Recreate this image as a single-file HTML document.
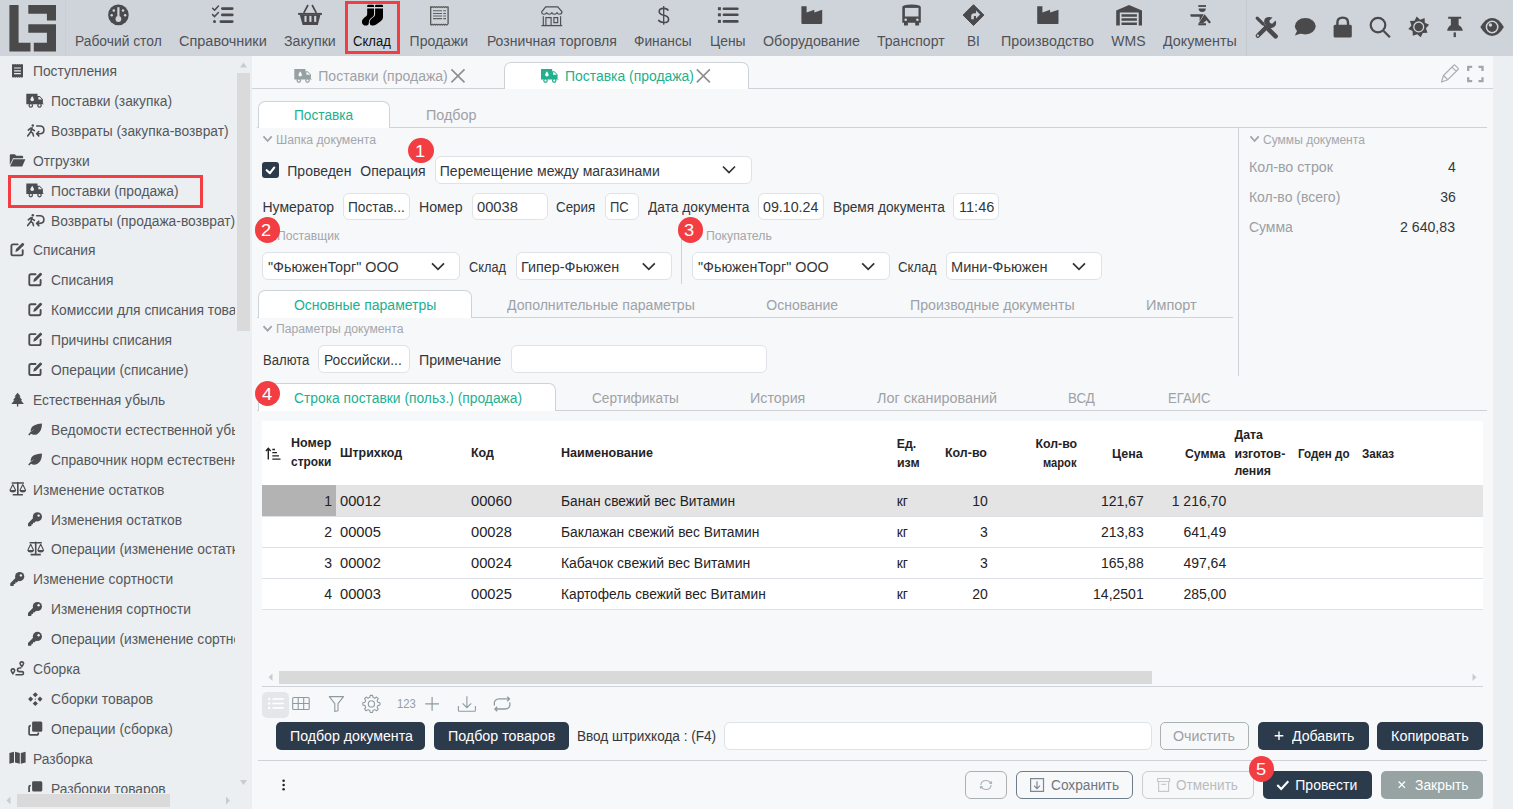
<!DOCTYPE html>
<html><head><meta charset="utf-8"><style>
html,body{margin:0;padding:0;width:1513px;height:809px;overflow:hidden;background:#f7f8fa;font-family:"Liberation Sans", sans-serif;}
.t{position:absolute;white-space:pre;line-height:1;transform-origin:0 0;}
svg{overflow:visible}
</style></head><body>
<div style="position:absolute;left:0px;top:0px;width:1513px;height:56px;background:#cfd4db"></div>
<div style="position:absolute;left:65px;top:0px;width:1px;height:56px;background:#c9ced5"></div>
<div style="position:absolute;left:1246px;top:0px;width:1px;height:56px;background:#c6cbd2"></div>
<svg style="position:absolute;left:0px;top:0px;" width="70" height="56" viewBox="0 0 70 56"><g fill="#4a4a4b"><path d="M9.4 5H18.6V42.8H30.5V51.6H9.4Z"/><path d="M28.3 5H56V20.6H46.9V13.7H28.3Z"/><path d="M28.3 24.2H56V51.6H33.8V42.8H46.9V32.7H28.3Z"/></g></svg>
<span class="t" style="left:74.91px;top:34.15px;font-size:14px;color:#505256;font-weight:400;transform:scaleX(0.9865);">Рабочий стол</span>
<span class="t" style="left:178.88px;top:34.15px;font-size:14px;color:#505256;font-weight:400;transform:scaleX(1.0342);">Справочники</span>
<span class="t" style="left:283.69px;top:34.15px;font-size:14px;color:#505256;font-weight:400;transform:scaleX(1.0142);">Закупки</span>
<span class="t" style="left:353.15px;top:34.15px;font-size:14px;color:#111;font-weight:400;transform:scaleX(0.9321);">Склад</span>
<span class="t" style="left:409.60px;top:34.15px;font-size:14px;color:#505256;font-weight:400;">Продажи</span>
<span class="t" style="left:486.90px;top:34.15px;font-size:14px;color:#505256;font-weight:400;">Розничная торговля</span>
<span class="t" style="left:633.91px;top:34.15px;font-size:14px;color:#505256;font-weight:400;transform:scaleX(0.9811);">Финансы</span>
<span class="t" style="left:709.61px;top:34.15px;font-size:14px;color:#505256;font-weight:400;transform:scaleX(0.9888);">Цены</span>
<span class="t" style="left:762.79px;top:34.15px;font-size:14px;color:#505256;font-weight:400;transform:scaleX(1.0182);">Оборудование</span>
<span class="t" style="left:877.30px;top:34.15px;font-size:14px;color:#505256;font-weight:400;transform:scaleX(1.0043);">Транспорт</span>
<span class="t" style="left:966.62px;top:34.15px;font-size:14px;color:#505256;font-weight:400;transform:scaleX(0.9747);">BI</span>
<span class="t" style="left:1001.09px;top:34.15px;font-size:14px;color:#505256;font-weight:400;transform:scaleX(1.0188);">Производство</span>
<span class="t" style="left:1111.30px;top:34.15px;font-size:14px;color:#505256;font-weight:400;">WMS</span>
<span class="t" style="left:1163.19px;top:34.15px;font-size:14px;color:#505256;font-weight:400;transform:scaleX(1.0213);">Документы</span>
<div style="position:absolute;left:345px;top:1px;width:55px;height:53px;box-sizing:border-box;border:3px solid #f23e43"></div>
<div style="position:absolute;left:0px;top:56px;width:252px;height:753px;background:#eceff1"></div>
<div style="position:absolute;left:0;top:56px;width:235px;height:737px;overflow:hidden">
<span class="t" style="left:33.21px;top:8.05px;font-size:14px;color:#53575c;font-weight:400;transform:scaleX(0.9860);">Поступления</span>
<span class="t" style="left:50.61px;top:37.95px;font-size:14px;color:#53575c;font-weight:400;transform:scaleX(0.9860);">Поставки (закупка)</span>
<span class="t" style="left:50.61px;top:67.85px;font-size:14px;color:#53575c;font-weight:400;transform:scaleX(0.9860);">Возвраты (закупка-возврат)</span>
<span class="t" style="left:33.21px;top:97.75px;font-size:14px;color:#53575c;font-weight:400;transform:scaleX(0.9860);">Отгрузки</span>
<span class="t" style="left:50.61px;top:127.65px;font-size:14px;color:#53575c;font-weight:400;transform:scaleX(0.9860);">Поставки (продажа)</span>
<span class="t" style="left:50.61px;top:157.55px;font-size:14px;color:#53575c;font-weight:400;transform:scaleX(0.9860);">Возвраты (продажа-возврат)</span>
<span class="t" style="left:33.21px;top:187.45px;font-size:14px;color:#53575c;font-weight:400;transform:scaleX(0.9860);">Списания</span>
<span class="t" style="left:50.61px;top:217.35px;font-size:14px;color:#53575c;font-weight:400;transform:scaleX(0.9860);">Списания</span>
<span class="t" style="left:50.61px;top:247.25px;font-size:14px;color:#53575c;font-weight:400;transform:scaleX(0.9860);">Комиссии для списания товаров</span>
<span class="t" style="left:50.61px;top:277.15px;font-size:14px;color:#53575c;font-weight:400;transform:scaleX(0.9860);">Причины списания</span>
<span class="t" style="left:50.61px;top:307.05px;font-size:14px;color:#53575c;font-weight:400;transform:scaleX(0.9860);">Операции (списание)</span>
<span class="t" style="left:33.21px;top:336.95px;font-size:14px;color:#53575c;font-weight:400;transform:scaleX(0.9860);">Естественная убыль</span>
<span class="t" style="left:50.61px;top:366.85px;font-size:14px;color:#53575c;font-weight:400;transform:scaleX(0.9860);">Ведомости естественной убыли</span>
<span class="t" style="left:50.61px;top:396.75px;font-size:14px;color:#53575c;font-weight:400;transform:scaleX(0.9860);">Справочник норм естественной убыли</span>
<span class="t" style="left:33.21px;top:426.65px;font-size:14px;color:#53575c;font-weight:400;transform:scaleX(0.9860);">Изменение остатков</span>
<span class="t" style="left:50.61px;top:456.55px;font-size:14px;color:#53575c;font-weight:400;transform:scaleX(0.9860);">Изменения остатков</span>
<span class="t" style="left:50.61px;top:486.45px;font-size:14px;color:#53575c;font-weight:400;transform:scaleX(0.9860);">Операции (изменение остатков)</span>
<span class="t" style="left:33.21px;top:516.35px;font-size:14px;color:#53575c;font-weight:400;transform:scaleX(0.9860);">Изменение сортности</span>
<span class="t" style="left:50.61px;top:546.25px;font-size:14px;color:#53575c;font-weight:400;transform:scaleX(0.9860);">Изменения сортности</span>
<span class="t" style="left:50.61px;top:576.15px;font-size:14px;color:#53575c;font-weight:400;transform:scaleX(0.9860);">Операции (изменение сортности)</span>
<span class="t" style="left:33.21px;top:606.05px;font-size:14px;color:#53575c;font-weight:400;transform:scaleX(0.9860);">Сборка</span>
<span class="t" style="left:50.61px;top:635.95px;font-size:14px;color:#53575c;font-weight:400;transform:scaleX(0.9860);">Сборки товаров</span>
<span class="t" style="left:50.61px;top:665.85px;font-size:14px;color:#53575c;font-weight:400;transform:scaleX(0.9860);">Операции (сборка)</span>
<span class="t" style="left:33.21px;top:695.75px;font-size:14px;color:#53575c;font-weight:400;transform:scaleX(0.9860);">Разборка</span>
<span class="t" style="left:50.61px;top:725.65px;font-size:14px;color:#53575c;font-weight:400;transform:scaleX(0.9860);">Разборки товаров</span>
</div>
<div style="position:absolute;left:8px;top:175px;width:195px;height:33px;box-sizing:border-box;border:3px solid #f23e43"></div>
<div style="position:absolute;left:237px;top:73px;width:13px;height:258px;background:#dadada"></div>
<div style="position:absolute;left:17px;top:794px;width:153px;height:13px;background:#dadada"></div>
<div style="position:absolute;left:252px;top:56px;width:1241px;height:753px;background:#f7f8fa"></div>
<div style="position:absolute;left:1493px;top:56px;width:20px;height:753px;background:#eceff1"></div>
<div style="position:absolute;left:252px;top:88px;width:1241px;height:1px;background:#cfd3d8"></div>
<div style="position:absolute;left:504px;top:62px;width:245px;height:27px;box-sizing:border-box;background:#fff;border:1px solid #cfd3d8;border-bottom:none;border-radius:7px 7px 0 0"></div>
<span class="t" style="left:318.30px;top:69.15px;font-size:14px;color:#9ea2a6;font-weight:400;">Поставки (продажа)</span>
<span class="t" style="left:564.60px;top:69.15px;font-size:14px;color:#22b08f;font-weight:400;transform:scaleX(0.9940);">Поставка (продажа)</span>
<div style="position:absolute;left:257px;top:127px;width:1230px;height:1px;background:#cfd3d8"></div>
<div style="position:absolute;left:258px;top:101px;width:132px;height:27px;box-sizing:border-box;background:#fff;border:1px solid #cfd3d8;border-bottom:none;border-radius:7px 7px 0 0"></div>
<span class="t" style="left:294.32px;top:107.65px;font-size:14px;color:#22b08f;font-weight:400;transform:scaleX(0.9776);">Поставка</span>
<span class="t" style="left:425.58px;top:107.65px;font-size:14px;color:#9ea2a6;font-weight:400;transform:scaleX(1.0234);">Подбор</span>
<span class="t" style="left:275.79px;top:134.04px;font-size:12px;color:#a3a7ab;font-weight:400;transform:scaleX(1.0193);">Шапка документа</span>
<div style="position:absolute;left:262px;top:162px;width:17px;height:16px;background:#2c3b4c;border-radius:3px"></div>
<span class="t" style="left:287.30px;top:164.05px;font-size:14px;color:#33373b;font-weight:400;">Проведен</span>
<span class="t" style="left:360.30px;top:164.05px;font-size:14px;color:#33373b;font-weight:400;">Операция</span>
<div style="position:absolute;left:435px;top:156px;width:317px;height:28px;box-sizing:border-box;background:#fff;border:1px solid #dfe2e6;border-radius:6px"></div>
<span class="t" style="left:439.80px;top:164.05px;font-size:14px;color:#33373b;font-weight:400;">Перемещение между магазинами</span>
<span class="t" style="left:262.50px;top:199.75px;font-size:14px;color:#33373b;font-weight:400;">Нумератор</span>
<div style="position:absolute;left:343px;top:193px;width:67px;height:27px;box-sizing:border-box;background:#fff;border:1px solid #dfe2e6;border-radius:6px"></div>
<span class="t" style="left:348.42px;top:199.75px;font-size:14px;color:#33373b;font-weight:400;transform:scaleX(0.9785);">Постав...</span>
<span class="t" style="left:419.49px;top:199.75px;font-size:14px;color:#33373b;font-weight:400;transform:scaleX(1.0107);">Номер</span>
<div style="position:absolute;left:472px;top:193px;width:76px;height:27px;box-sizing:border-box;background:#fff;border:1px solid #dfe2e6;border-radius:6px"></div>
<span class="t" style="left:477.26px;top:199.75px;font-size:14px;color:#33373b;font-weight:400;transform:scaleX(1.0509);">00038</span>
<span class="t" style="left:556.33px;top:199.75px;font-size:14px;color:#33373b;font-weight:400;transform:scaleX(0.9538);">Серия</span>
<div style="position:absolute;left:605px;top:193px;width:34px;height:27px;box-sizing:border-box;background:#fff;border:1px solid #dfe2e6;border-radius:6px"></div>
<span class="t" style="left:609.95px;top:199.75px;font-size:14px;color:#33373b;font-weight:400;transform:scaleX(0.9260);">ПС</span>
<span class="t" style="left:648.41px;top:199.75px;font-size:14px;color:#33373b;font-weight:400;transform:scaleX(0.9832);">Дата документа</span>
<div style="position:absolute;left:758px;top:193px;width:66px;height:27px;box-sizing:border-box;background:#fff;border:1px solid #dfe2e6;border-radius:6px"></div>
<span class="t" style="left:763.29px;top:199.75px;font-size:14px;color:#33373b;font-weight:400;transform:scaleX(1.0153);">09.10.24</span>
<span class="t" style="left:833.02px;top:199.75px;font-size:14px;color:#33373b;font-weight:400;transform:scaleX(0.9782);">Время документа</span>
<div style="position:absolute;left:953px;top:193px;width:46px;height:27px;box-sizing:border-box;background:#fff;border:1px solid #dfe2e6;border-radius:6px"></div>
<span class="t" style="left:958.77px;top:199.75px;font-size:14px;color:#33373b;font-weight:400;transform:scaleX(1.0393);">11:46</span>
<span class="t" style="left:276.79px;top:230.14px;font-size:12px;color:#a3a7ab;font-weight:400;transform:scaleX(1.0113);">Поставщик</span>
<span class="t" style="left:705.69px;top:230.14px;font-size:12px;color:#a3a7ab;font-weight:400;transform:scaleX(1.0202);">Покупатель</span>
<div style="position:absolute;left:681px;top:238px;width:1px;height:46px;background:#cfd3d8"></div>
<div style="position:absolute;left:262px;top:252px;width:198px;height:28px;box-sizing:border-box;background:#fff;border:1px solid #dfe2e6;border-radius:6px"></div>
<span class="t" style="left:267.68px;top:259.65px;font-size:14px;color:#33373b;font-weight:400;transform:scaleX(1.0232);">&quot;ФьюженТорг&quot; ООО</span>
<span class="t" style="left:469.36px;top:259.65px;font-size:14px;color:#33373b;font-weight:400;transform:scaleX(0.9121);">Склад</span>
<div style="position:absolute;left:516px;top:252px;width:156px;height:28px;box-sizing:border-box;background:#fff;border:1px solid #dfe2e6;border-radius:6px"></div>
<span class="t" style="left:521.48px;top:259.65px;font-size:14px;color:#33373b;font-weight:400;transform:scaleX(1.0259);">Гипер-Фьюжен</span>
<div style="position:absolute;left:692px;top:252px;width:198px;height:28px;box-sizing:border-box;background:#fff;border:1px solid #dfe2e6;border-radius:6px"></div>
<span class="t" style="left:697.58px;top:259.65px;font-size:14px;color:#33373b;font-weight:400;transform:scaleX(1.0224);">&quot;ФьюженТорг&quot; ООО</span>
<span class="t" style="left:898.34px;top:259.65px;font-size:14px;color:#33373b;font-weight:400;transform:scaleX(0.9472);">Склад</span>
<div style="position:absolute;left:946px;top:252px;width:156px;height:28px;box-sizing:border-box;background:#fff;border:1px solid #dfe2e6;border-radius:6px"></div>
<span class="t" style="left:951.27px;top:259.65px;font-size:14px;color:#33373b;font-weight:400;transform:scaleX(1.0408);">Мини-Фьюжен</span>
<div style="position:absolute;left:257px;top:317px;width:976px;height:1px;background:#cfd3d8"></div>
<div style="position:absolute;left:258px;top:290px;width:214px;height:28px;box-sizing:border-box;background:#fff;border:1px solid #cfd3d8;border-bottom:none;border-radius:7px 7px 0 0"></div>
<span class="t" style="left:293.90px;top:297.75px;font-size:14px;color:#22b08f;font-weight:400;">Основные параметры</span>
<span class="t" style="left:507.10px;top:297.75px;font-size:14px;color:#9ea2a6;font-weight:400;transform:scaleX(1.0051);">Дополнительные параметры</span>
<span class="t" style="left:766.30px;top:297.75px;font-size:14px;color:#9ea2a6;font-weight:400;">Основание</span>
<span class="t" style="left:910.19px;top:297.75px;font-size:14px;color:#9ea2a6;font-weight:400;transform:scaleX(1.0098);">Производные документы</span>
<span class="t" style="left:1146.08px;top:297.75px;font-size:14px;color:#9ea2a6;font-weight:400;transform:scaleX(1.0350);">Импорт</span>
<span class="t" style="left:275.79px;top:322.74px;font-size:12px;color:#a3a7ab;font-weight:400;transform:scaleX(1.0135);">Параметры документа</span>
<span class="t" style="left:262.55px;top:353.15px;font-size:14px;color:#33373b;font-weight:400;transform:scaleX(0.9347);">Валюта</span>
<div style="position:absolute;left:318px;top:345px;width:92px;height:28px;box-sizing:border-box;background:#fff;border:1px solid #dfe2e6;border-radius:6px"></div>
<span class="t" style="left:323.71px;top:353.15px;font-size:14px;color:#33373b;font-weight:400;transform:scaleX(0.9873);">Российски...</span>
<span class="t" style="left:419.49px;top:353.15px;font-size:14px;color:#33373b;font-weight:400;transform:scaleX(1.0148);">Примечание</span>
<div style="position:absolute;left:511px;top:345px;width:256px;height:28px;box-sizing:border-box;background:#fff;border:1px solid #dfe2e6;border-radius:6px"></div>
<div style="position:absolute;left:1238px;top:128px;width:1px;height:248px;background:#cfd3d8"></div>
<span class="t" style="left:1262.90px;top:133.84px;font-size:12px;color:#a3a7ab;font-weight:400;transform:scaleX(1.0032);">Суммы документа</span>
<span class="t" style="left:1248.89px;top:159.95px;font-size:14px;color:#9b9fa3;font-weight:400;transform:scaleX(1.0173);">Кол-во строк</span>
<span class="t" style="left:1248.90px;top:189.95px;font-size:14px;color:#9b9fa3;font-weight:400;">Кол-во (всего)</span>
<span class="t" style="left:1248.90px;top:219.75px;font-size:14px;color:#9b9fa3;font-weight:400;">Сумма</span>
<span class="t" style="left:1448.11px;top:159.95px;font-size:14px;color:#33373b;font-weight:400;">4</span>
<span class="t" style="left:1440.33px;top:189.95px;font-size:14px;color:#33373b;font-weight:400;">36</span>
<span class="t" style="left:1400.29px;top:219.75px;font-size:14px;color:#33373b;font-weight:400;transform:scaleX(1.0097);">2 640,83</span>
<div style="position:absolute;left:257px;top:410px;width:1230px;height:1px;background:#cfd3d8"></div>
<div style="position:absolute;left:258px;top:383px;width:298px;height:28px;box-sizing:border-box;background:#fff;border:1px solid #cfd3d8;border-bottom:none;border-radius:7px 7px 0 0"></div>
<span class="t" style="left:293.91px;top:390.75px;font-size:14px;color:#22b08f;font-weight:400;transform:scaleX(0.9867);">Строка поставки (польз.) (продажа)</span>
<span class="t" style="left:592.32px;top:390.75px;font-size:14px;color:#9ea2a6;font-weight:400;transform:scaleX(0.9728);">Сертификаты</span>
<span class="t" style="left:750.19px;top:390.75px;font-size:14px;color:#9ea2a6;font-weight:400;transform:scaleX(1.0191);">История</span>
<span class="t" style="left:877.38px;top:390.75px;font-size:14px;color:#9ea2a6;font-weight:400;transform:scaleX(1.0278);">Лог сканирований</span>
<span class="t" style="left:1068.33px;top:390.75px;font-size:14px;color:#9ea2a6;font-weight:400;transform:scaleX(0.9555);">ВСД</span>
<span class="t" style="left:1167.55px;top:390.75px;font-size:14px;color:#9ea2a6;font-weight:400;transform:scaleX(0.9328);">ЕГАИС</span>
<div style="position:absolute;left:262px;top:421px;width:1221px;height:188px;background:#fff"></div>
<span class="t" style="left:290.68px;top:437.29px;font-size:12.3px;color:#1f2326;font-weight:700;transform:scaleX(1.0158);">Номер</span>
<span class="t" style="left:290.70px;top:456.39px;font-size:12.3px;color:#1f2326;font-weight:700;transform:scaleX(0.9689);">строки</span>
<span class="t" style="left:340.28px;top:447.09px;font-size:12.3px;color:#1f2326;font-weight:700;transform:scaleX(1.0097);">Штрихкод</span>
<span class="t" style="left:470.78px;top:447.09px;font-size:12.3px;color:#1f2326;font-weight:700;transform:scaleX(1.0080);">Код</span>
<span class="t" style="left:560.97px;top:447.09px;font-size:12.3px;color:#1f2326;font-weight:700;transform:scaleX(1.0196);">Наименование</span>
<span class="t" style="left:896.78px;top:437.59px;font-size:12.3px;color:#1f2326;font-weight:700;">Ед.</span>
<span class="t" style="left:896.78px;top:456.59px;font-size:12.3px;color:#1f2326;font-weight:700;transform:scaleX(1.0079);">изм</span>
<span class="t" style="left:945.18px;top:447.29px;font-size:12.3px;color:#1f2326;font-weight:700;transform:scaleX(1.0097);">Кол-во</span>
<span class="t" style="left:1035.59px;top:437.59px;font-size:12.3px;color:#1f2326;font-weight:700;">Кол-во</span>
<span class="t" style="left:1043.44px;top:456.59px;font-size:12.3px;color:#1f2326;font-weight:700;transform:scaleX(0.9067);">марок</span>
<span class="t" style="left:1112.18px;top:447.59px;font-size:12.3px;color:#1f2326;font-weight:700;transform:scaleX(1.0140);">Цена</span>
<span class="t" style="left:1185.19px;top:447.59px;font-size:12.3px;color:#1f2326;font-weight:700;transform:scaleX(0.9970);">Сумма</span>
<span class="t" style="left:1234.38px;top:428.59px;font-size:12.3px;color:#1f2326;font-weight:700;">Дата</span>
<span class="t" style="left:1234.38px;top:447.59px;font-size:12.3px;color:#1f2326;font-weight:700;">изготов-</span>
<span class="t" style="left:1234.38px;top:465.19px;font-size:12.3px;color:#1f2326;font-weight:700;">ления</span>
<span class="t" style="left:1298.32px;top:447.59px;font-size:12.3px;color:#1f2326;font-weight:700;transform:scaleX(0.9461);">Годен до</span>
<span class="t" style="left:1362.41px;top:447.59px;font-size:12.3px;color:#1f2326;font-weight:700;transform:scaleX(0.9522);">Заказ</span>
<div style="position:absolute;left:262px;top:485px;width:1221px;height:31px;background:#e4e4e4"></div>
<div style="position:absolute;left:262px;top:485px;width:74px;height:31px;background:#b3b3b3"></div>
<div style="position:absolute;left:262px;top:516px;width:1221px;height:1px;background:#dde1e5"></div>
<div style="position:absolute;left:262px;top:547px;width:1221px;height:1px;background:#dde1e5"></div>
<div style="position:absolute;left:262px;top:578px;width:1221px;height:1px;background:#dde1e5"></div>
<div style="position:absolute;left:262px;top:609px;width:1221px;height:1px;background:#dde1e5"></div>
<span class="t" style="left:324.21px;top:493.65px;font-size:14px;color:#1f2326;font-weight:400;">1</span>
<span class="t" style="left:339.97px;top:493.65px;font-size:14px;color:#1f2326;font-weight:400;transform:scaleX(1.0483);">00012</span>
<span class="t" style="left:470.76px;top:493.65px;font-size:14px;color:#1f2326;font-weight:400;transform:scaleX(1.0509);">00060</span>
<span class="t" style="left:560.91px;top:493.65px;font-size:14px;color:#1f2326;font-weight:400;transform:scaleX(0.9817);">Банан свежий вес Витамин</span>
<span class="t" style="left:896.70px;top:493.65px;font-size:14px;color:#1f2326;font-weight:400;">кг</span>
<span class="t" style="left:972.23px;top:493.65px;font-size:14px;color:#1f2326;font-weight:400;">10</span>
<span class="t" style="left:1100.88px;top:493.65px;font-size:14px;color:#1f2326;font-weight:400;">121,67</span>
<span class="t" style="left:1171.70px;top:493.65px;font-size:14px;color:#1f2326;font-weight:400;">1 216,70</span>
<span class="t" style="left:324.21px;top:524.65px;font-size:14px;color:#1f2326;font-weight:400;">2</span>
<span class="t" style="left:339.97px;top:524.65px;font-size:14px;color:#1f2326;font-weight:400;transform:scaleX(1.0483);">00005</span>
<span class="t" style="left:470.76px;top:524.65px;font-size:14px;color:#1f2326;font-weight:400;transform:scaleX(1.0509);">00028</span>
<span class="t" style="left:560.91px;top:524.65px;font-size:14px;color:#1f2326;font-weight:400;transform:scaleX(0.9864);">Баклажан свежий вес Витамин</span>
<span class="t" style="left:896.70px;top:524.65px;font-size:14px;color:#1f2326;font-weight:400;">кг</span>
<span class="t" style="left:980.01px;top:524.65px;font-size:14px;color:#1f2326;font-weight:400;">3</span>
<span class="t" style="left:1100.88px;top:524.65px;font-size:14px;color:#1f2326;font-weight:400;">213,83</span>
<span class="t" style="left:1183.38px;top:524.65px;font-size:14px;color:#1f2326;font-weight:400;">641,49</span>
<span class="t" style="left:324.21px;top:555.65px;font-size:14px;color:#1f2326;font-weight:400;">3</span>
<span class="t" style="left:339.97px;top:555.65px;font-size:14px;color:#1f2326;font-weight:400;transform:scaleX(1.0483);">00002</span>
<span class="t" style="left:470.76px;top:555.65px;font-size:14px;color:#1f2326;font-weight:400;transform:scaleX(1.0509);">00024</span>
<span class="t" style="left:560.90px;top:555.65px;font-size:14px;color:#1f2326;font-weight:400;">Кабачок свежий вес Витамин</span>
<span class="t" style="left:896.70px;top:555.65px;font-size:14px;color:#1f2326;font-weight:400;">кг</span>
<span class="t" style="left:980.01px;top:555.65px;font-size:14px;color:#1f2326;font-weight:400;">3</span>
<span class="t" style="left:1100.88px;top:555.65px;font-size:14px;color:#1f2326;font-weight:400;">165,88</span>
<span class="t" style="left:1183.38px;top:555.65px;font-size:14px;color:#1f2326;font-weight:400;">497,64</span>
<span class="t" style="left:324.21px;top:586.65px;font-size:14px;color:#1f2326;font-weight:400;">4</span>
<span class="t" style="left:339.97px;top:586.65px;font-size:14px;color:#1f2326;font-weight:400;transform:scaleX(1.0483);">00003</span>
<span class="t" style="left:470.76px;top:586.65px;font-size:14px;color:#1f2326;font-weight:400;transform:scaleX(1.0509);">00025</span>
<span class="t" style="left:560.91px;top:586.65px;font-size:14px;color:#1f2326;font-weight:400;transform:scaleX(0.9808);">Картофель свежий вес Витамин</span>
<span class="t" style="left:896.70px;top:586.65px;font-size:14px;color:#1f2326;font-weight:400;">кг</span>
<span class="t" style="left:972.23px;top:586.65px;font-size:14px;color:#1f2326;font-weight:400;">20</span>
<span class="t" style="left:1093.09px;top:586.65px;font-size:14px;color:#1f2326;font-weight:400;">14,2501</span>
<span class="t" style="left:1183.38px;top:586.65px;font-size:14px;color:#1f2326;font-weight:400;">285,00</span>
<div style="position:absolute;left:279px;top:671px;width:873px;height:13px;background:#d9d9d9"></div>
<div style="position:absolute;left:262px;top:686px;width:1221px;height:1px;background:#cfd3d8"></div>
<div style="position:absolute;left:262px;top:692px;width:27px;height:26px;background:#e4e6e9;border-radius:5px"></div>
<span class="t" style="left:396.83px;top:697.20px;font-size:13px;color:#939ea2;font-weight:400;transform:scaleX(0.8706);">123</span>
<div style="position:absolute;left:276px;top:722px;width:149px;height:28px;background:#2c3b4c;border-radius:5px"></div>
<span class="t" style="left:289.59px;top:728.75px;font-size:14px;color:#fff;font-weight:400;transform:scaleX(1.0114);">Подбор документа</span>
<div style="position:absolute;left:434px;top:722px;width:135px;height:28px;background:#2c3b4c;border-radius:5px"></div>
<span class="t" style="left:447.89px;top:728.75px;font-size:14px;color:#fff;font-weight:400;transform:scaleX(1.0190);">Подбор товаров</span>
<span class="t" style="left:577.12px;top:728.95px;font-size:14px;color:#33373b;font-weight:400;transform:scaleX(0.9696);">Ввод штрихкода : (F4)</span>
<div style="position:absolute;left:724px;top:722px;width:428px;height:28px;box-sizing:border-box;background:#fff;border:1px solid #dfe2e6;border-radius:6px"></div>
<div style="position:absolute;left:1160px;top:722px;width:89px;height:28px;box-sizing:border-box;border:1px solid #a9b2b0;border-radius:5px"></div>
<span class="t" style="left:1173.29px;top:728.95px;font-size:14px;color:#9ba0a3;font-weight:400;transform:scaleX(1.0162);">Очистить</span>
<div style="position:absolute;left:1258px;top:722px;width:111px;height:28px;background:#2c3b4c;border-radius:5px"></div>
<span class="t" style="left:1291.69px;top:728.75px;font-size:14px;color:#fff;font-weight:400;transform:scaleX(1.0091);">Добавить</span>
<div style="position:absolute;left:1377px;top:722px;width:106px;height:28px;background:#2c3b4c;border-radius:5px"></div>
<span class="t" style="left:1390.78px;top:728.75px;font-size:14px;color:#fff;font-weight:400;transform:scaleX(1.0303);">Копировать</span>
<div style="position:absolute;left:258px;top:760px;width:1229px;height:1px;background:#cfd3d8"></div>
<div style="position:absolute;left:965px;top:771px;width:42px;height:28px;box-sizing:border-box;border:1px solid #a9b2b0;border-radius:6px"></div>
<div style="position:absolute;left:1016px;top:771px;width:117px;height:28px;box-sizing:border-box;border:1px solid #6e7b88;border-radius:6px"></div>
<span class="t" style="left:1050.82px;top:777.95px;font-size:14px;color:#6f767d;font-weight:400;transform:scaleX(0.9777);">Сохранить</span>
<div style="position:absolute;left:1142px;top:771px;width:112px;height:28px;box-sizing:border-box;border:1px solid #c9cfcd;border-radius:6px"></div>
<span class="t" style="left:1176.32px;top:777.95px;font-size:14px;color:#b9bdbf;font-weight:400;transform:scaleX(0.9681);">Отменить</span>
<div style="position:absolute;left:1263px;top:771px;width:109px;height:28px;background:#2c3b4c;border-radius:5px"></div>
<span class="t" style="left:1295.30px;top:777.75px;font-size:14px;color:#fff;font-weight:400;">Провести</span>
<div style="position:absolute;left:1381px;top:771px;width:102px;height:28px;background:#97a3a2;border-radius:5px"></div>
<span class="t" style="left:1414.61px;top:777.75px;font-size:14px;color:#fff;font-weight:400;transform:scaleX(0.9922);">Закрыть</span>
<svg style="position:absolute;left:0;top:0" width="1513" height="809" viewBox="0 0 1513 809"><circle cx="118.4" cy="14.9" r="10.3" fill="#4a4a4c"/><path d="M117.3 7.2h2.2v9.5h-2.2z" fill="#cfd4db" /><circle cx="118.4" cy="19" r="2.9" fill="#cfd4db"/><circle cx="113.8" cy="10.4" r="1.25" fill="#cfd4db"/><circle cx="123" cy="10.4" r="1.25" fill="#cfd4db"/><circle cx="111.7" cy="15.2" r="1.25" fill="#cfd4db"/><circle cx="125.1" cy="15.2" r="1.25" fill="#cfd4db"/><path d="M212.6 8.2l2 2 3.8-4.1" fill="none" stroke="#4a4a4c" stroke-width="1.5" stroke-linecap="round" stroke-linejoin="round"/><path d="M212.6 14.6l2 2 3.8-4.1" fill="none" stroke="#4a4a4c" stroke-width="1.5" stroke-linecap="round" stroke-linejoin="round"/><circle cx="214.5" cy="21.6" r="1.5" fill="#4a4a4c"/><path d="M222.3 8.6H232.3M222.3 14.9H232.3M220.8 21.6H232.3" fill="none" stroke="#4a4a4c" stroke-width="2.6" stroke-linecap="round"/><path d="M303.8 12.9L308 5M316.3 12.9L312.1 5" fill="none" stroke="#4a4a4c" stroke-width="1.7" /><path d="M298.1 12.9H321.9V14.9H298.1Z" fill="#4a4a4c" /><path d="M299.8 14.9H320.4L317.8 25.1H302.6Z" fill="#4a4a4c" /><path d="M304.45 15.9h2.1v6h-2.1z" fill="#cfd4db" /><path d="M309.34999999999997 15.9h2.1v6h-2.1z" fill="#cfd4db" /><path d="M314.15 15.9h2.1v6h-2.1z" fill="#cfd4db" /><path d="M367.2 8.6H374V14.5Q374 15.8 372.8 16.7L371 18Q368.6 19.9 368.8 22.4Q369 24.6 367.6 25.2Q365.8 25.8 364.3 25.4Q361.9 24.8 361.9 22.3Q361.9 19.5 364.4 17.6L366.2 16.2Q367.2 15.4 367.2 14Z" fill="#000" /><path d="M375.1 8.6H383V17.6Q383 19.5 381 21L376.2 24.5Q374.2 25.8 372.2 25.5Q369.6 25 369.6 22.4Q369.6 20 371.9 18.3L374 16.8Q375.1 16 375.1 14.5Z" fill="#000" /><path d="M367.2 7V5.8Q367.2 4.7 368.3 4.7H372.9Q374 4.7 374 5.8V7Z" fill="#000" /><path d="M375.1 7V5.8Q375.1 4.7 376.2 4.7H381.9Q383 4.7 383 5.8V7Z" fill="#000" /><path d="M430.7 6.5V24.3M448.1 6.5V24.3" fill="none" stroke="#555" stroke-width="1.3" /><path d="M430.2 6.6l1.1 0.9 1.1-0.9 1.1 0.9 1.1-0.9 1.1 0.9 1.1-0.9 1.1 0.9 1.1-0.9 1.1 0.9 1.1-0.9 1.1 0.9 1.1-0.9 1.1 0.9 1.1-0.9 1.1 0.9 1.1-0.9" fill="none" stroke="#555" stroke-width="1.1" /><path d="M430.2 24.2l1.1 0.9 1.1-0.9 1.1 0.9 1.1-0.9 1.1 0.9 1.1-0.9 1.1 0.9 1.1-0.9 1.1 0.9 1.1-0.9 1.1 0.9 1.1-0.9 1.1 0.9 1.1-0.9 1.1 0.9 1.1-0.9" fill="none" stroke="#555" stroke-width="1.1" /><path d="M433 10.8H442M443.2 10.8H446M433 13.4H442M443.2 13.4H446M433 16H442M443.2 16H446M433 18.6H442M443.2 18.6H446" fill="none" stroke="#606060" stroke-width="1.05" /><path d="M545.7 6.8H557.8L562 11.8Q562 14.2 559.6 14.2Q557.2 14.2 557 12.3Q556.8 14.2 554.3 14.2Q551.9 14.2 551.8 12.3Q551.6 14.2 549.2 14.2Q546.8 14.2 546.6 12.3Q546.4 14.2 544 14.2Q541.6 14.2 541.7 11.8Z" fill="none" stroke="#4f5053" stroke-width="1.15" /><path d="M543.3 16.2V25.3M560.6 16.2V25.3M545.9 25.3V17.6H551.1V25.3M553.9 17.6H557.7V22.6H553.9Z" fill="none" stroke="#4f5053" stroke-width="1.15" /><path d="M541.4 25.6H562.2" fill="none" stroke="#4f5053" stroke-width="1.3" /><path d="M663.7 6.1V24.7" fill="none" stroke="#4a4a4c" stroke-width="1.3" /><path d="M668.3 10.6Q667.4 8.4 663.7 8.4Q659.2 8.4 659.2 11.6Q659.2 14.2 663.7 15.3Q668.6 16.4 668.6 19.4Q668.6 22.5 663.7 22.5Q659.6 22.5 658.4 19.9" fill="none" stroke="#4a4a4c" stroke-width="1.6" /><path d="M717.9 7.199999999999999h3v3h-3z" fill="#4a4a4c" /><path d="M717.9 13.3h3v3h-3z" fill="#4a4a4c" /><path d="M717.9 19.9h3v3h-3z" fill="#4a4a4c" /><path d="M723.9 8.7H737.4M723.9 14.8H737.4M723.9 21.4H737.4" fill="none" stroke="#4a4a4c" stroke-width="2.6" stroke-linecap="round"/><path d="M801.4 6.2H806.6V12.6L814.3 9.8V12.6L822.2 9.8V23.1Q822.2 23.9 821.4 23.9H802.2Q801.4 23.9 801.4 23.1Z" fill="#4a4a4c" /><path d="M1037.2 6.2H1042.4V12.6L1050.1 9.8V12.6L1058.5 9.8V23.2Q1058.5 24 1057.7 24H1038Q1037.2 24 1037.2 23.2Z" fill="#4a4a4c" /><path d="M902.3 7.2Q902.3 4.6 911.5 4.6Q920.8 4.6 920.8 7.2V22.8H919.1V25.4H915.2V22.8H907.9V25.4H904V22.8H902.3Z" fill="#4a4a4c" /><path d="M904.9 7.9H918.5V16.5H904.9Z" fill="#cfd4db" /><circle cx="905.7" cy="19.7" r="1.3" fill="#cfd4db"/><circle cx="917.4" cy="19.7" r="1.3" fill="#cfd4db"/><path d="M973.5 4.7L983.9 15.1L973.5 25.5L963.1 15.1Z" fill="#4a4a4c" stroke="#4a4a4c" stroke-width="1" stroke-linejoin="round"/><path d="M971.2 19.2V16.2Q971.2 13.2 974.5 13.2H976V10.6L980.1 14.6L976 18.6V16H974.6Q973.8 16 973.8 16.8V19.2Z" fill="#cfd4db" /><path d="M1116.2 10.4L1129 5.1L1142 10.4V25.4H1138.7V12.4H1119.8V25.4H1116.2Z" fill="#4a4a4c" /><path d="M1121.5 15.4H1136.9M1121.5 19.6H1136.9M1121.5 23.8H1136.9" fill="none" stroke="#4a4a4c" stroke-width="2.5" /><path d="M1198.3 5.1H1206V6.9H1198.3Z" fill="#4a4a4c" /><path d="M1198.6 8.6H1205.8Q1205.8 12 1202.2 12Q1198.6 12 1198.6 8.6Z" fill="#4a4a4c" /><path d="M1190.4 14.2H1203.8L1199.6 21.3V16.7H1191.6Q1190.4 16.7 1190.4 15.45Z" fill="#4a4a4c" /><path d="M1204.6 14.3L1211 22.3L1209.2 23.5L1206.5 20.2L1203.3 23.1H1198.8Z" fill="#4a4a4c" /><path d="M1198.3 23.2H1206V25.3H1198.3Z" fill="#4a4a4c" /><path d="M1257.2 18.1L1263 23.9" fill="none" stroke="#4a4a4c" stroke-width="3.2" stroke-linecap="round"/><path d="M1263 23.9L1268.5 29.4" fill="none" stroke="#4a4a4c" stroke-width="1.6" /><path d="M1268.8 29.6L1275.6 36.3" fill="none" stroke="#4a4a4c" stroke-width="4.6" stroke-linecap="round"/><path d="M1257.8 35.8L1266 27.6" fill="none" stroke="#4a4a4c" stroke-width="4.4" stroke-linecap="round"/><circle cx="1257.9" cy="35.6" r="1.05" fill="#cfd4db"/><path d="M1264.4 23.6Q1263.2 18.5 1267.4 17.3Q1270.2 16.6 1272.5 17.6L1269.3 20.8L1270 23L1272.2 23.7L1275.6 20.5Q1276.8 23.5 1275.2 26Q1272.5 29.2 1268 27.6Z" fill="#4a4a4c" /><ellipse cx="1305.3" cy="26.2" rx="10.4" ry="8.2" fill="#4a4a4c"/><path d="M1297.5 30L1294.8 35.6L1302.5 33Z" fill="#4a4a4c" /><path d="M1337.4 25V22.5Q1337.4 17.6 1342.7 17.6Q1348 17.6 1348 22.5V25" fill="none" stroke="#4a4a4c" stroke-width="2.4" /><path d="M1333.6 26.2Q1333.6 24.7 1335.1 24.7H1350.3Q1351.8 24.7 1351.8 26.2V36Q1351.8 37.5 1350.3 37.5H1335.1Q1333.6 37.5 1333.6 36Z" fill="#4a4a4c" /><circle cx="1378" cy="25.1" r="7.3" fill="none" stroke="#4a4a4c" stroke-width="2.2"/><path d="M1383.6 31L1389.9 37.3" fill="none" stroke="#4a4a4c" stroke-width="2.3" /><path d="M1416.63 16.50L1414.59 20.75L1409.89 21.01L1411.44 25.46L1408.30 28.97L1412.55 31.01L1412.81 35.71L1417.26 34.16L1420.77 37.30L1422.81 33.05L1427.51 32.79L1425.96 28.34L1429.10 24.83L1424.85 22.79L1424.59 18.09L1420.14 19.64Z" fill="#4a4a4c" /><circle cx="1418.7" cy="26.9" r="4.9" fill="none" stroke="#cfd4db" stroke-width="1.3"/><path d="M1448.2 16.8H1461.2V18.8H1458.6V25Q1462.7 27.5 1462.7 30.8H1447.2Q1447.2 27.5 1450.9 25V18.8H1448.2Z" fill="#4a4a4c" /><path d="M1453.6 32.4H1455.9V37.1H1453.6Z" fill="#4a4a4c" /><path d="M1480.3 27Q1485.5 18 1492.1 18Q1498.7 18 1503.9 27Q1498.7 35.9 1492.1 35.9Q1485.5 35.9 1480.3 27Z" fill="#4a4a4c" /><circle cx="1492.1" cy="27" r="5.7" fill="none" stroke="#cfd4db" stroke-width="1.5"/><circle cx="1492.4" cy="27.2" r="3.7" fill="#4a4a4c"/><circle cx="1490.4" cy="25" r="1.7" fill="#cfd4db"/><g transform="translate(12 64.0)"><path d="M0 0.6L1.1 0L2.2 0.6L3.3 0L4.4 0.6L5.5 0L6.6 0.6L7.7 0L8.8 0.6L9.9 0L11 0.6V13.1L9.9 13.7L8.8 13.1L7.7 13.7L6.6 13.1L5.5 13.7L4.4 13.1L3.3 13.7L2.2 13.1L1.1 13.7L0 13.1Z" fill="#4c4d50"/><path d="M2.1 4H8.9M2.1 6.8H8.9M2.1 9.6H8.9" stroke="#eceff1" stroke-width="1.2"/></g><g transform="translate(26.3 93.7)"><path d="M0 0H11.2V10.6H0Z M11.2 2.4H13.4L16.6 5.5V10.1H17.5V10.6H11.2Z" fill="#4c4d50"/><path d="M12.1 3.3H13.2L15.6 5.6V5.9H12.1Z" fill="#eceff1"/><path d="M5.9 2.3Q4.1 4.9 4.1 5.9Q4.1 7.6 5.9 7.6Q7.7 7.6 7.7 5.9Q7.7 4.9 5.9 2.3Z" fill="#eceff1"/><circle cx="4.5" cy="11.7" r="2.3" fill="#4c4d50"/><circle cx="4.5" cy="11.7" r="1.1" fill="#eceff1"/><circle cx="13.2" cy="11.7" r="2.3" fill="#4c4d50"/><circle cx="13.2" cy="11.7" r="1.1" fill="#eceff1"/></g><g transform="translate(26.5 124.50000000000001)"><circle cx="6.3" cy="1.1" r="1.25" fill="#4c4d50"/><path d="M5.6 3.2L4.3 7.2M4.3 7.2L1.2 11.4M4.3 7.2L6.2 8.6L7 11.4M1.8 5.6L4.2 3.6L7.9 6.1" fill="none" stroke="#4c4d50" stroke-width="1.6" stroke-linecap="round" stroke-linejoin="round"/><path d="M10.2 1.5H13.4Q17.4 1.5 17.4 5.4Q17.4 9.2 13.4 9.2H10.6M12.3 7L10.1 9.2L12.3 11.4" fill="none" stroke="#4c4d50" stroke-width="1.6" stroke-linecap="round" stroke-linejoin="round"/></g><g transform="translate(9.8 154.29999999999998)"><path d="M0 1Q0 0 1 0H5L6.5 1.5H12.4Q13.3 1.5 13.3 2.4V4H3.2L0 10.6Z" fill="#4c4d50"/><path d="M3.6 5H15.6L12.4 12.3H0.2Z" fill="#4c4d50"/></g><g transform="translate(26.3 183.4)"><path d="M0 0H11.2V10.6H0Z M11.2 2.4H13.4L16.6 5.5V10.1H17.5V10.6H11.2Z" fill="#4c4d50"/><path d="M12.1 3.3H13.2L15.6 5.6V5.9H12.1Z" fill="#eceff1"/><path d="M5.9 2.3Q4.1 4.9 4.1 5.9Q4.1 7.6 5.9 7.6Q7.7 7.6 7.7 5.9Q7.7 4.9 5.9 2.3Z" fill="#eceff1"/><circle cx="4.5" cy="11.7" r="2.3" fill="#4c4d50"/><circle cx="4.5" cy="11.7" r="1.1" fill="#eceff1"/><circle cx="13.2" cy="11.7" r="2.3" fill="#4c4d50"/><circle cx="13.2" cy="11.7" r="1.1" fill="#eceff1"/></g><g transform="translate(26.5 214.2)"><circle cx="6.3" cy="1.1" r="1.25" fill="#4c4d50"/><path d="M5.6 3.2L4.3 7.2M4.3 7.2L1.2 11.4M4.3 7.2L6.2 8.6L7 11.4M1.8 5.6L4.2 3.6L7.9 6.1" fill="none" stroke="#4c4d50" stroke-width="1.6" stroke-linecap="round" stroke-linejoin="round"/><path d="M10.2 1.5H13.4Q17.4 1.5 17.4 5.4Q17.4 9.2 13.4 9.2H10.6M12.3 7L10.1 9.2L12.3 11.4" fill="none" stroke="#4c4d50" stroke-width="1.6" stroke-linecap="round" stroke-linejoin="round"/></g><g transform="translate(10.4 242.49999999999997)"><path d="M7.2 1.9H2.6Q1 1.9 1 3.5V11.8Q1 12.9 2.3 12.9H10.7Q12.3 12.9 12.3 11.3V7.6" fill="none" stroke="#4c4d50" stroke-width="1.9" stroke-linecap="round"/><path d="M5 9.6L5.6 6.6L11.5 0.7Q12.2 0 12.9 0.7L13.5 1.3Q14.2 2 13.5 2.7L7.6 8.6Z" fill="#4c4d50"/></g><g transform="translate(28.3 272.4)"><path d="M7.2 1.9H2.6Q1 1.9 1 3.5V11.8Q1 12.9 2.3 12.9H10.7Q12.3 12.9 12.3 11.3V7.6" fill="none" stroke="#4c4d50" stroke-width="1.9" stroke-linecap="round"/><path d="M5 9.6L5.6 6.6L11.5 0.7Q12.2 0 12.9 0.7L13.5 1.3Q14.2 2 13.5 2.7L7.6 8.6Z" fill="#4c4d50"/></g><g transform="translate(28.3 302.3)"><path d="M7.2 1.9H2.6Q1 1.9 1 3.5V11.8Q1 12.9 2.3 12.9H10.7Q12.3 12.9 12.3 11.3V7.6" fill="none" stroke="#4c4d50" stroke-width="1.9" stroke-linecap="round"/><path d="M5 9.6L5.6 6.6L11.5 0.7Q12.2 0 12.9 0.7L13.5 1.3Q14.2 2 13.5 2.7L7.6 8.6Z" fill="#4c4d50"/></g><g transform="translate(28.3 332.2)"><path d="M7.2 1.9H2.6Q1 1.9 1 3.5V11.8Q1 12.9 2.3 12.9H10.7Q12.3 12.9 12.3 11.3V7.6" fill="none" stroke="#4c4d50" stroke-width="1.9" stroke-linecap="round"/><path d="M5 9.6L5.6 6.6L11.5 0.7Q12.2 0 12.9 0.7L13.5 1.3Q14.2 2 13.5 2.7L7.6 8.6Z" fill="#4c4d50"/></g><g transform="translate(28.3 362.1)"><path d="M7.2 1.9H2.6Q1 1.9 1 3.5V11.8Q1 12.9 2.3 12.9H10.7Q12.3 12.9 12.3 11.3V7.6" fill="none" stroke="#4c4d50" stroke-width="1.9" stroke-linecap="round"/><path d="M5 9.6L5.6 6.6L11.5 0.7Q12.2 0 12.9 0.7L13.5 1.3Q14.2 2 13.5 2.7L7.6 8.6Z" fill="#4c4d50"/></g><g transform="translate(11.3 392.7)"><path d="M6.3 0L9.4 3.9H8.1L10.9 7.5H9.5L12.6 11.4H7V13.7H5.6V11.4H0L3.1 7.5H1.7L4.5 3.9H3.2Z" fill="#4c4d50"/></g><g transform="translate(28 423.59999999999997)"><path d="M14 0Q14 7.5 9.5 10.3Q6 12.2 3 10.2Q2.2 11 1.5 12L0.2 11.2Q3.5 6.5 8.5 5.2Q4.8 5.5 2.6 8.1Q2.4 3.4 6.5 1.6Q9.5 0.3 14 0Z" fill="#4c4d50"/></g><g transform="translate(28 453.5)"><path d="M14 0Q14 7.5 9.5 10.3Q6 12.2 3 10.2Q2.2 11 1.5 12L0.2 11.2Q3.5 6.5 8.5 5.2Q4.8 5.5 2.6 8.1Q2.4 3.4 6.5 1.6Q9.5 0.3 14 0Z" fill="#4c4d50"/></g><g transform="translate(9.1 481.79999999999995)"><path d="M2.6 1.2H14.8M8.7 0.2V12.6M3.6 13H13.8" fill="none" stroke="#4c4d50" stroke-width="1.6"/><path d="M3.7 2.6L0.9 8.4M3.7 2.6L6.5 8.4M13.7 2.6L10.9 8.4M13.7 2.6L16.5 8.4" fill="none" stroke="#4c4d50" stroke-width="1.1"/><path d="M0.3 8.3H7.1Q6.7 10.8 3.7 10.8Q0.7 10.8 0.3 8.3Z M10.3 8.3H17.1Q16.7 10.8 13.7 10.8Q10.7 10.8 10.3 8.3Z" fill="#4c4d50"/></g><g transform="translate(28 512.2)"><circle cx="9.4" cy="4.6" r="4.6" fill="#4c4d50"/><circle cx="10.6" cy="3.4" r="1.2" fill="#eceff1"/><path d="M5.6 5.4L8.6 8.4L6.5 10.5H5V12H3.5V13.5L2.6 14H0V11.2Z" fill="#4c4d50"/></g><g transform="translate(27 541.6)"><path d="M2.6 1.2H14.8M8.7 0.2V12.6M3.6 13H13.8" fill="none" stroke="#4c4d50" stroke-width="1.6"/><path d="M3.7 2.6L0.9 8.4M3.7 2.6L6.5 8.4M13.7 2.6L10.9 8.4M13.7 2.6L16.5 8.4" fill="none" stroke="#4c4d50" stroke-width="1.1"/><path d="M0.3 8.3H7.1Q6.7 10.8 3.7 10.8Q0.7 10.8 0.3 8.3Z M10.3 8.3H17.1Q16.7 10.8 13.7 10.8Q10.7 10.8 10.3 8.3Z" fill="#4c4d50"/></g><g transform="translate(10.3 572.0)"><circle cx="9.4" cy="4.6" r="4.6" fill="#4c4d50"/><circle cx="10.6" cy="3.4" r="1.2" fill="#eceff1"/><path d="M5.6 5.4L8.6 8.4L6.5 10.5H5V12H3.5V13.5L2.6 14H0V11.2Z" fill="#4c4d50"/></g><g transform="translate(28 601.9)"><circle cx="9.4" cy="4.6" r="4.6" fill="#4c4d50"/><circle cx="10.6" cy="3.4" r="1.2" fill="#eceff1"/><path d="M5.6 5.4L8.6 8.4L6.5 10.5H5V12H3.5V13.5L2.6 14H0V11.2Z" fill="#4c4d50"/></g><g transform="translate(28 631.8000000000001)"><circle cx="9.4" cy="4.6" r="4.6" fill="#4c4d50"/><circle cx="10.6" cy="3.4" r="1.2" fill="#eceff1"/><path d="M5.6 5.4L8.6 8.4L6.5 10.5H5V12H3.5V13.5L2.6 14H0V11.2Z" fill="#4c4d50"/></g><g transform="translate(10.3 661.7)"><path d="M11.5 -0.6Q14 -0.6 14 1.9Q14 3.4 11.5 6.2Q9 3.4 9 1.9Q9 -0.6 11.5 -0.6Z" fill="#4c4d50"/><circle cx="11.5" cy="2" r="0.95" fill="#eceff1"/><path d="M2.6 6.4Q5.1 6.4 5.1 8.9Q5.1 10.4 2.6 13.2Q0.1 10.4 0.1 8.9Q0.1 6.4 2.6 6.4Z" fill="#4c4d50"/><circle cx="2.6" cy="9" r="0.95" fill="#eceff1"/><path d="M10.9 6.3H9.2Q7.2 6.3 7.2 8.1Q7.2 9.9 9.2 9.9H11.6Q13.2 9.9 13.2 11.5Q13.2 13.1 11.6 13.1H5.2" fill="none" stroke="#4c4d50" stroke-width="1.6"/></g><g transform="translate(28.1 692.3)"><path d="M7.2 0L9.8 2.5L7.2 5L4.6 2.5Z M7.2 8.6L9.8 11.1L7.2 13.6L4.6 11.1Z M2.5 4.2L5 6.8L2.5 9.4L0 6.8Z M11.9 4.2L14.4 6.8L11.9 9.4L9.4 6.8Z" fill="#4c4d50"/><circle cx="7.2" cy="6.8" r="0.7" fill="#4c4d50"/></g><g transform="translate(28.1 721.5)"><path d="M5.3 0H12.7Q14.2 0 14.2 1.5V8.7Q14.2 10.2 12.7 10.2H5.5Q4 10.2 4 8.7V1.3Q4 0 5.3 0Z" fill="#4c4d50"/><path d="M2.7 4.2Q1 4.2 1 5.9V12.2Q1 13.4 2.2 13.4H8.5Q10.2 13.4 10.2 11.7V11" fill="none" stroke="#4c4d50" stroke-width="1.7"/></g><g transform="translate(9.4 751.8)"><path d="M0 1.2L4.6 0V10.8L0 12Z M5.6 0L10.4 1.2V12L5.6 10.8Z M11.4 1.2L16.2 0V10.8L11.4 12Z" fill="#4c4d50"/></g><clipPath id="sbclip"><rect x="0" y="56" width="235" height="736"/></clipPath><g clip-path="url(#sbclip)"><g transform="translate(28.1 781.3)"><path d="M5.3 0H12.7Q14.2 0 14.2 1.5V8.7Q14.2 10.2 12.7 10.2H5.5Q4 10.2 4 8.7V1.3Q4 0 5.3 0Z" fill="#4c4d50"/><path d="M2.7 4.2Q1 4.2 1 5.9V12.2Q1 13.4 2.2 13.4H8.5Q10.2 13.4 10.2 11.7V11" fill="none" stroke="#4c4d50" stroke-width="1.7"/></g></g><path d="M240 67.5L243.5 62.5L247 67.5Z" fill="#c9cbcd" /><path d="M240 780L243.5 785L247 780Z" fill="#c9cbcd" /><path d="M10.5 796.5L6.5 800.5L10.5 804.5Z" fill="#c9cbcd" /><path d="M226 796.5L230 800.5L226 804.5Z" fill="#c9cbcd" /><g transform="translate(294.3 68.9)"><path d="M0 0H11.2V10.6H0Z M11.2 2.4H13.4L16.6 5.5V10.1H17.5V10.6H11.2Z" fill="#95a0a1"/><path d="M12.1 3.3H13.2L15.6 5.6V5.9H12.1Z" fill="#f7f8fa"/><path d="M5.9 2.3Q4.1 4.9 4.1 5.9Q4.1 7.6 5.9 7.6Q7.7 7.6 7.7 5.9Q7.7 4.9 5.9 2.3Z" fill="#f7f8fa"/><circle cx="4.5" cy="11.7" r="2.3" fill="#95a0a1"/><circle cx="4.5" cy="11.7" r="1.1" fill="#f7f8fa"/><circle cx="13.2" cy="11.7" r="2.3" fill="#95a0a1"/><circle cx="13.2" cy="11.7" r="1.1" fill="#f7f8fa"/></g><g transform="translate(541 68.9)"><path d="M0 0H11.2V10.6H0Z M11.2 2.4H13.4L16.6 5.5V10.1H17.5V10.6H11.2Z" fill="#22b08f"/><path d="M12.1 3.3H13.2L15.6 5.6V5.9H12.1Z" fill="#fff"/><path d="M5.9 2.3Q4.1 4.9 4.1 5.9Q4.1 7.6 5.9 7.6Q7.7 7.6 7.7 5.9Q7.7 4.9 5.9 2.3Z" fill="#fff"/><circle cx="4.5" cy="11.7" r="2.3" fill="#22b08f"/><circle cx="4.5" cy="11.7" r="1.1" fill="#fff"/><circle cx="13.2" cy="11.7" r="2.3" fill="#22b08f"/><circle cx="13.2" cy="11.7" r="1.1" fill="#fff"/></g><path d="M451.4 69.4L464.5 82.4M464.5 69.4L451.4 82.4" fill="none" stroke="#8e8e8e" stroke-width="1.6" /><path d="M696.8 69.4L709.9 82.4M709.9 69.4L696.8 82.4" fill="none" stroke="#8e8e8e" stroke-width="1.6" /><path d="M1441.5 82L1443.5 75.5L1453.8 65.3Q1454.5 64.6 1455.2 65.3L1458 68.1Q1458.7 68.8 1458 69.5L1447.8 79.7Z M1443.5 75.5L1447.8 79.7M1452 67.1L1456.2 71.3" fill="none" stroke="#a6afb2" stroke-width="1.2" stroke-linejoin="round"/><path d="M1468.2 71V66.8H1472.2M1478.5 66.8H1482.5V71M1482.5 77.2V81.2H1478.5M1472.2 81.2H1468.2V77.2" fill="none" stroke="#9ea8ab" stroke-width="2.3" /><path d="M263.5 136.4L267.6 141.0L271.70000000000005 136.4" fill="none" stroke="#9ea6ab" stroke-width="1.8" /><path d="M263.5 326.1L267.6 330.7L271.70000000000005 326.1" fill="none" stroke="#9ea6ab" stroke-width="1.8" /><path d="M1250.5 136.4L1254.6 141.0L1258.6999999999998 136.4" fill="none" stroke="#9ea6ab" stroke-width="1.8" /><path d="M266.7 170.2L269.9 173.2L274.2 167.6" fill="none" stroke="#fff" stroke-width="2.2" stroke-linecap="round" stroke-linejoin="round"/><path d="M723 166.5L729 172.5L735 166.5" fill="none" stroke="#2f3236" stroke-width="1.7" /><path d="M432 263.3L438 269.3L444 263.3" fill="none" stroke="#2f3236" stroke-width="1.7" /><path d="M642.8 263.3L648.8 269.3L654.8 263.3" fill="none" stroke="#2f3236" stroke-width="1.7" /><path d="M862.2 263.3L868.2 269.3L874.2 263.3" fill="none" stroke="#2f3236" stroke-width="1.7" /><path d="M1073 263.3L1079 269.3L1085 263.3" fill="none" stroke="#2f3236" stroke-width="1.7" /><path d="M268.3 459.5V448.5M265.9 451L268.3 448.3L270.7 451" fill="none" stroke="#222" stroke-width="1.4" /><path d="M272.3 449.5H275M272.3 452.7H277M272.3 455.9H279M272.3 459.1H280.5" fill="none" stroke="#222" stroke-width="1.3" /><path d="M272.5 673.5L268.5 677.3L272.5 681.1Z" fill="#c9cbcd" /><path d="M1472.5 673.5L1476.5 677.3L1472.5 681.1Z" fill="#c9cbcd" /><circle cx="269.2" cy="699" r="1.2" fill="#fff"/><path d="M272.4 699H283.8" fill="none" stroke="#fff" stroke-width="1.6" /><circle cx="269.2" cy="703.5" r="1.2" fill="#fff"/><path d="M272.4 703.5H283.8" fill="none" stroke="#fff" stroke-width="1.6" /><circle cx="269.2" cy="707.9" r="1.2" fill="#fff"/><path d="M272.4 707.9H283.8" fill="none" stroke="#fff" stroke-width="1.6" /><path d="M293.7 697.5H308.2Q309.2 697.5 309.2 698.5V708.5Q309.2 709.5 308.2 709.5H293.7Q292.7 709.5 292.7 708.5V698.5Q292.7 697.5 293.7 697.5Z M292.7 703.5H309.2M298.2 697.5V709.5M303.7 697.5V709.5" fill="none" stroke="#8d9aa0" stroke-width="1.1" /><path d="M329.3 696.6H343.5L338 703.6V710.8L334.8 711.5V703.6Z" fill="none" stroke="#8d9aa0" stroke-width="1.1" stroke-linejoin="round"/><path d="M380.00 703.90L379.93 705.02L377.78 705.61L377.50 706.43L377.12 707.20L378.22 709.14L377.48 709.98L376.64 710.72L374.70 709.62L373.93 710.00L373.11 710.28L372.52 712.43L371.40 712.50L370.28 712.43L369.69 710.28L368.87 710.00L368.10 709.62L366.16 710.72L365.32 709.98L364.58 709.14L365.68 707.20L365.30 706.43L365.02 705.61L362.87 705.02L362.80 703.90L362.87 702.78L365.02 702.19L365.30 701.37L365.68 700.60L364.58 698.66L365.32 697.82L366.16 697.08L368.10 698.18L368.87 697.80L369.69 697.52L370.28 695.37L371.40 695.30L372.52 695.37L373.11 697.52L373.93 697.80L374.70 698.18L376.64 697.08L377.48 697.82L378.22 698.66L377.12 700.60L377.50 701.37L377.78 702.19L379.93 702.78Z" fill="none" stroke="#8d9aa0" stroke-width="1.1" stroke-linejoin="round"/><circle cx="371.4" cy="703.9" r="3.1" fill="none" stroke="#8d9aa0" stroke-width="1.1"/><path d="M425.2 703.9H439M432.1 697V710.8" fill="none" stroke="#8d9aa0" stroke-width="1.2" /><path d="M466.9 696.2V707.6M462.6 703.3L466.9 707.6L471.2 703.3M458.4 706V710.4Q458.4 711.2 459.2 711.2H474.6Q475.4 711.2 475.4 710.4V706" fill="none" stroke="#8d9aa0" stroke-width="1.1" /><path d="M494.5 705.5Q493.3 698.9 499.5 698.9H509.2M507.2 696.6L509.5 698.9L507.2 701.2M509.7 702.3Q510.9 709 504.7 709H495.2M497.2 706.7L494.9 709L497.2 711.3" fill="none" stroke="#8d9aa0" stroke-width="1.3" /><path d="M1274.7 735.8H1283.3M1279 731.5V740.1" fill="none" stroke="#fff" stroke-width="1.4" /><path d="M1277.3 785L1281.2 788.9L1288.3 781.3" fill="none" stroke="#fff" stroke-width="2.1" /><path d="M1398.6 781.5L1405 787.9M1405 781.5L1398.6 787.9" fill="none" stroke="#fff" stroke-width="1.3" /><path d="M1157.6 778.5H1169.6V781.5H1157.6Z M1158.6 781.5V791.3H1168.6V781.5 M1161.3 784.3H1165.9" fill="none" stroke="#c5cacb" stroke-width="1.2" /><path d="M1030.6 778.6H1043.5V791.4H1030.6Z" fill="none" stroke="#7c8893" stroke-width="1.2" /><path d="M1037 781.2V788.6M1034 785.6L1037 788.6L1040 785.6" fill="none" stroke="#7c8893" stroke-width="1.2" /><path d="M980.8 785Q981.3 780.5 986 780.5Q989.2 780.5 990.5 783M991.2 785Q990.7 789.5 986 789.5Q982.8 789.5 981.5 787" fill="none" stroke="#a7b2b4" stroke-width="1.1" /><path d="M989 783.7L992.2 783.9L991.7 780.7Z" fill="#a7b2b4" /><path d="M983 786.3L979.8 786.1L980.3 789.3Z" fill="#a7b2b4" /><circle cx="283.6" cy="780.8" r="1.25" fill="#222"/><circle cx="283.6" cy="785" r="1.25" fill="#222"/><circle cx="283.6" cy="789.2" r="1.25" fill="#222"/></svg>
<div style="position:absolute;left:408.3px;top:137.8px;width:25.4px;height:25.4px;background:#f23e43;border-radius:50%"></div>
<span class="t" style="left:415.09px;top:142.61px;font-size:17px;color:#fff;font-weight:400;transform:scaleX(1.0738);">1</span>
<div style="position:absolute;left:254.7px;top:217.3px;width:25.4px;height:25.4px;background:#f23e43;border-radius:50%"></div>
<span class="t" style="left:261.49px;top:222.11px;font-size:17px;color:#fff;font-weight:400;transform:scaleX(1.0738);">2</span>
<div style="position:absolute;left:677.6999999999999px;top:217.3px;width:25.4px;height:25.4px;background:#f23e43;border-radius:50%"></div>
<span class="t" style="left:684.49px;top:222.11px;font-size:17px;color:#fff;font-weight:400;transform:scaleX(1.0738);">3</span>
<div style="position:absolute;left:255.0px;top:380.90000000000003px;width:25.4px;height:25.4px;background:#f23e43;border-radius:50%"></div>
<span class="t" style="left:261.79px;top:385.71px;font-size:17px;color:#fff;font-weight:400;transform:scaleX(1.0738);">4</span>
<div style="position:absolute;left:1249.0px;top:756.3px;width:25.4px;height:25.4px;background:#f23e43;border-radius:50%"></div>
<span class="t" style="left:1255.79px;top:761.11px;font-size:17px;color:#fff;font-weight:400;transform:scaleX(1.0738);">5</span>
</body></html>
